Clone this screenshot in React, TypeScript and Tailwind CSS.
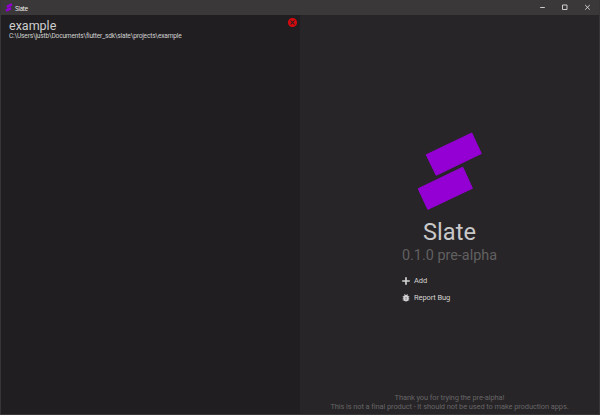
import React from "react";
import { MdCancel } from "react-icons/md";

function Logo({ className }: { className: string }) {
  return (
    <svg viewBox="0 0 66 80" className={className} fill="#9400d3" stroke="#9400d3" strokeWidth="1" strokeLinejoin="round">
      <path d="M54.8 2 64.3 22.6 19.2 44.3 9.2 23.8Z" />
      <path d="M45.8 36.2 55.4 57.3 10.8 78.4 1.2 57.7Z" />
    </svg>
  );
}

function TitleBar() {
  return (
    <header className="flex h-[15px] shrink-0 items-center bg-[#3a3839] pl-[4px] text-[#f0f0f0]">
      <Logo className="h-[9px] w-[8px]" />
      <span className="ml-[2px] pt-px font-['Open_Sans',sans-serif] text-[6.5px] leading-[15px] tracking-[-0.4px]">Slate</span>
      <svg viewBox="0 0 60 15" className="ml-auto h-[15px] w-[60px]" fill="none" stroke="#dedede" strokeWidth="0.9">
        <path d="M1.2 7.5H5.8M23.5 5h4.5v4.5h-4.5ZM46.2 5l4.6 4.6M50.8 5l-4.6 4.6" />
      </svg>
    </header>
  );
}

function ProjectList() {
  return (
    <section className="flex w-[299px] shrink-0 items-start justify-between bg-[#201e20] pr-[2px] pl-[8px]">
      <div className="pt-[4px]">
        <h2 className="text-[12.5px] leading-[14px] text-[#cececf]">example</h2>
        <p className="text-[6.6px] leading-[7px] tracking-[-0.19px] whitespace-nowrap text-[#d2d2d3]">
          C:\Users\justb\Documents\flutter_sdk\slate\projects\example
        </p>
      </div>
      <MdCancel className="mt-[2px] size-[11px] text-[#d00a0e]" />
    </section>
  );
}

function Welcome() {
  return (
    <section className="flex flex-1 flex-col items-center bg-[#272527]">
      <Logo className="mt-[116px] h-[80px] w-[66px]" />
      <h1 className="mt-[7px] text-[23.6px] leading-[28px] text-[#c9c8c9]">Slate</h1>
      <p className="mt-px text-[14.4px] leading-[17px] text-[#616061]">0.1.0 pre-alpha</p>
      <div className="mt-[8px] flex w-[97px] flex-col text-[7.5px] leading-[17px] tracking-[-0.1px] text-[#d3d2d3]">
        <button className="flex h-[17px] items-center gap-[3px]">
          <svg viewBox="0 0 10 10" className="size-[10px]" fill="none" stroke="currentColor" strokeWidth="1.7">
            <path d="M5 1.2v7.6M1.2 5h7.6" />
          </svg>
          Add
        </button>
        <button className="flex h-[17px] items-center gap-[3px]">
          <svg viewBox="0 0 10 10" className="size-[10px]" fill="currentColor">
            <rect x="2.4" y="2" width="5.2" height="6.4" rx="2.4" />
            <path d="M3.2 1.5 5 2.5 6.8 1.5M1.7 3.6h6.6M1.7 5.3h6.6M1.7 7h6.6" fill="none" stroke="currentColor" strokeWidth="0.8" />
            <path d="M4.2 4.6h1.6M4.2 6.1h1.6" stroke="#777577" strokeWidth="0.7" />
          </svg>
          Report Bug
        </button>
      </div>
      <footer className="mt-auto pb-[3px] text-center text-[7.5px] leading-[9px] tracking-[-0.11px] whitespace-nowrap text-[#666466]">
        <p>Thank you for trying the pre-alpha!</p>
        <p>This is not a final product - it should not be used to make production apps.</p>
      </footer>
    </section>
  );
}

export default function App() {
  return (
    <div className="flex h-[415px] w-[600px] flex-col overflow-hidden border border-t-0 border-[#373536] bg-[#272527] font-[Roboto,sans-serif]">
      <TitleBar />
      <main className="flex min-h-0 flex-1">
        <ProjectList />
        <Welcome />
      </main>
    </div>
  );
}
